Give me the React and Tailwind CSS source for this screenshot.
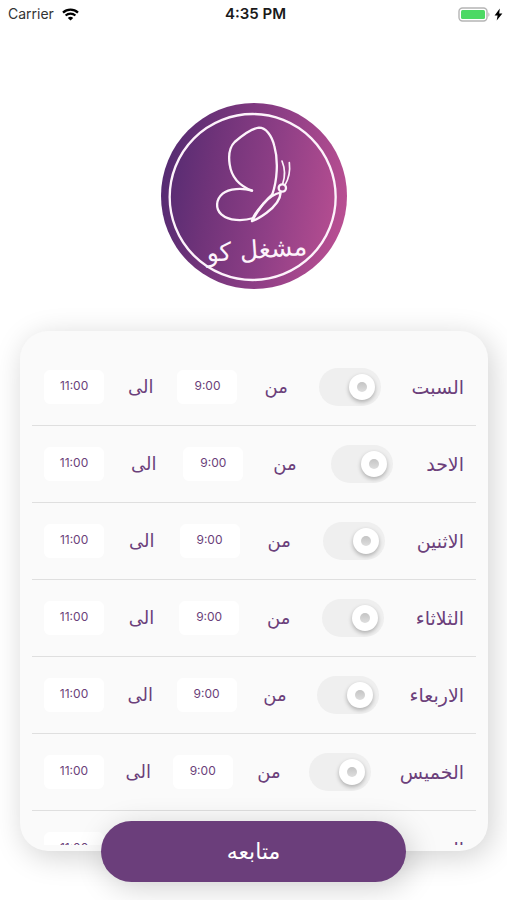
import React, { useState } from "react";

const initialDays = [
  { id: "sat", label: "السبت", from: "9:00", to: "11:00", active: true },
  { id: "sun", label: "الاحد", from: "9:00", to: "11:00", active: true },
  { id: "mon", label: "الاثنين", from: "9:00", to: "11:00", active: true },
  { id: "tue", label: "الثلاثاء", from: "9:00", to: "11:00", active: true },
  { id: "wed", label: "الاربعاء", from: "9:00", to: "11:00", active: true },
  { id: "thu", label: "الخميس", from: "9:00", to: "11:00", active: true },
  { id: "fri", label: "الجمعه", from: "9:00", to: "11:00", active: true },
];

const StatusBar = () => (
  <header
    dir="ltr"
    className="grid h-7 shrink-0 grid-cols-3 items-center pl-2 pr-1 font-['Inter',sans-serif] text-sm text-black"
  >
    <div className="flex items-center gap-2">
      <span className="text-[#333333]">Carrier</span>
      <svg viewBox="0 0 17 13" className="h-[13px] w-[17px]" fill="none">
        <path d="M1 4.6C5.2.7 11.8.7 16 4.6" stroke="#000" strokeWidth="2.3" />
        <path d="M3.6 7.5c2.8-2.5 7-2.5 9.8 0" stroke="#000" strokeWidth="2.2" />
        <path d="M8.5 12.6 5.8 9.9c1.5-1.4 3.9-1.4 5.4 0z" fill="#000" />
      </svg>
    </div>
    <span className="text-center text-[15px] font-semibold text-[#1a1a1a]">4:35 PM</span>
    <div className="flex items-center justify-end gap-1">
      <svg viewBox="0 0 32 15" className="h-[15px] w-8">
        <rect x="1" y="1" width="28" height="13" rx="3.5" fill="#fff" stroke="#b5b5b5" strokeWidth="1.4" />
        <rect x="3" y="3" width="24" height="9" rx="1.5" fill="#4cd964" />
        <path d="M30.4 5.2c1.4.8 1.4 3.8 0 4.6z" fill="#b5b5b5" />
      </svg>
      <svg viewBox="0 0 9 13" className="h-[13px] w-[9px]">
        <path d="M5.8.6.6 7.4h3L2.7 12.4 8.4 5.4H5.2z" fill="#000" />
      </svg>
    </div>
  </header>
);

const Logo = () => (
  <svg viewBox="18 16 558 558" className="h-[186px] w-[186px]" fill="none">
    <defs>
      <linearGradient id="brand" x1="0" y1="0.42" x2="1" y2="0.58">
        <stop offset="0" stopColor="#552b72" />
        <stop offset="0.25" stopColor="#6f3379" />
        <stop offset="0.6" stopColor="#8f3f86" />
        <stop offset="1" stopColor="#b94f92" />
      </linearGradient>
    </defs>
    <circle cx="297" cy="295" r="279" fill="url(#brand)" />
    <circle cx="293" cy="298" r="249" stroke="#fdf3fb" strokeWidth="7" />
    <g stroke="#fdf3fb" strokeWidth="7" strokeLinecap="round" strokeLinejoin="round">
      <path d="M352 290C366 250 371 190 358 145C350 112 332 90 312 90C290 92 262 113 239 133C222 150 221 180 224 200C229 236 252 264 291 279" />
      <path d="M291 279C262 270 222 272 203 288C182 306 181 334 199 350C222 370 262 371 296 361" />
      <path d="M352 290C330 310 308 338 291 370" />
      <path d="M291 370C296 350 309 336 326 317C342 300 358 288 377 285C376 306 357 329 334 346C320 356 307 366 291 370Z" />
      <circle cx="382" cy="271" r="11" />
      <path d="M383 259C391 236 390 212 381 190" strokeWidth="5" />
      <path d="M390 262C402 242 406 220 403 195" strokeWidth="5" />
    </g>
    <text
      x="307"
      y="482"
      textAnchor="middle"
      direction="rtl"
      fill="#fdf3fb"
      fontSize="76"
      transform="rotate(-4 307 482)"
      className="font-['DejaVu_Sans',sans-serif]"
    >
      مشغل كو
    </text>
  </svg>
);

const Toggle = ({ id, checked, onChange }) => (
  <span className="relative mx-1 h-[38px] w-[62px] shrink-0">
    <input
      id={id}
      type="checkbox"
      role="switch"
      checked={checked}
      onChange={onChange}
      className="peer h-full w-full cursor-pointer appearance-none rounded-full bg-[#efefef]"
    />
    <span className="pointer-events-none absolute left-1.5 top-1.5 flex h-[26px] w-[26px] items-center justify-center rounded-full bg-white shadow-[0_2px_4px_rgba(0,0,0,0.28)] transition-all peer-checked:left-[30px]">
      <span className="h-2.5 w-2.5 rounded-full bg-linear-to-b from-[#c4c4c4] to-[#dedede]" />
    </span>
  </span>
);

const TimeInput = ({ label, value, onChange }) => (
  <input
    type="text"
    dir="ltr"
    aria-label={label}
    value={value}
    onChange={onChange}
    className="h-[34px] w-[60px] shrink-0 rounded-md bg-white pb-1 text-center font-['Inter',sans-serif] text-xs text-[#6b3f7a] outline-none"
  />
);

const App = () => {
  const [days, setDays] = useState(initialDays);

  const updateDay = (id, changes) => {
    setDays(days.map((day) => (day.id === id ? { ...day, ...changes } : day)));
  };

  return (
    <div
      dir="rtl"
      className="flex h-screen flex-col overflow-hidden bg-white font-['DejaVu_Sans',sans-serif] text-[#6b3f7a]"
    >
      <StatusBar />

      <div className="mt-[75px] flex shrink-0 justify-center">
        <Logo />
      </div>

      <main className="ml-5 mr-[19px] mt-[42px] flex min-h-0 flex-1 flex-col rounded-[28px] bg-[#fafafa] px-3 pb-1.5 pt-[18px] shadow-[4px_6px_30px_rgba(0,0,0,0.18)]">
        <ul className="min-h-0 flex-1 overflow-y-auto [scrollbar-width:none]">
          {days.map((day) => (
            <li
              key={day.id}
              className="flex h-[77px] items-center justify-between border-b border-[#dfdfdf] px-3"
            >
              <label htmlFor={day.id} className="text-[19px]">
                {day.label}
              </label>
              <Toggle
                id={day.id}
                checked={day.active}
                onChange={(e) => updateDay(day.id, { active: e.target.checked })}
              />
              <span className="flex w-6 justify-center text-lg">من</span>
              <TimeInput
                label={`${day.label} من`}
                value={day.from}
                onChange={(e) => updateDay(day.id, { from: e.target.value })}
              />
              <span className="flex w-5 justify-center text-lg">الى</span>
              <TimeInput
                label={`${day.label} الى`}
                value={day.to}
                onChange={(e) => updateDay(day.id, { to: e.target.value })}
              />
            </li>
          ))}
        </ul>
      </main>

      <button
        type="button"
        className="z-10 mx-auto -mt-[30px] mb-[18px] h-[61px] w-3/5 shrink-0 cursor-pointer rounded-full bg-[#6b3e7b] text-[22px] text-white shadow-[4px_6px_30px_rgba(0,0,0,0.18)]"
      >
        متابعه
      </button>
    </div>
  );
};

export default App;
